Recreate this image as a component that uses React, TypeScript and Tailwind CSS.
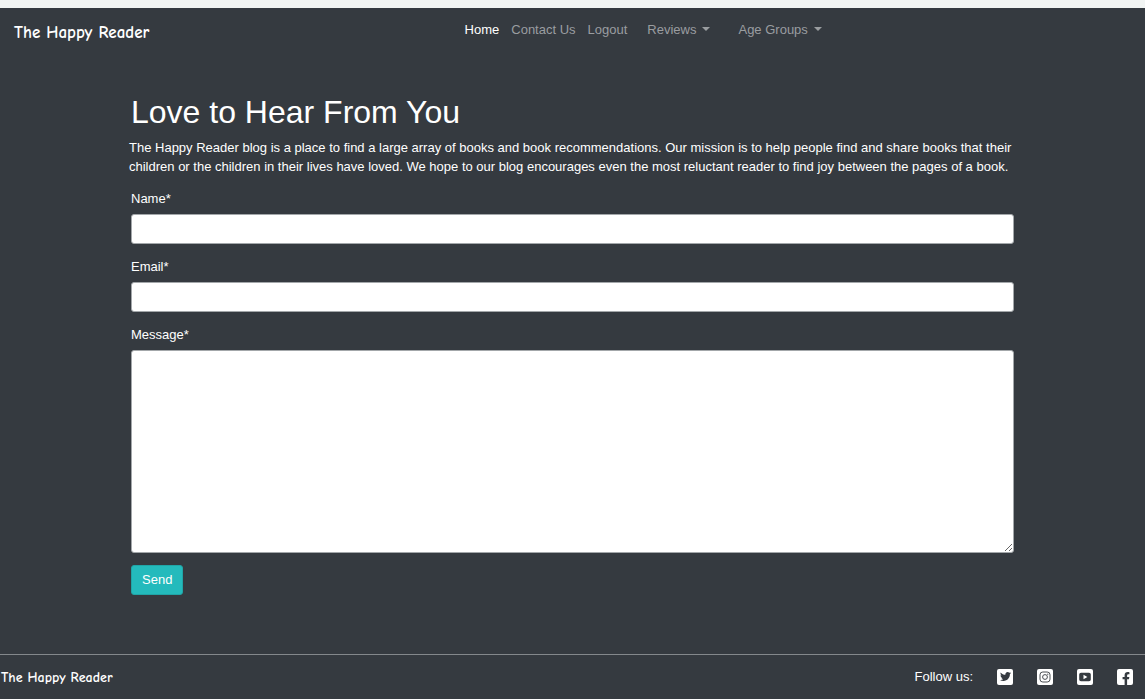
import { FaFacebookF, FaTwitter } from "react-icons/fa";

const brandFont = "font-['Comic_Sans_MS','Comic_Neue',Lato,sans-serif] font-bold";

function Caret() {
  return <span aria-hidden="true" className="mb-0.5 h-0 w-0 border-x-4 border-t-4 border-x-transparent border-t-current" />;
}

function TwitterIcon() {
  return <FaTwitter className="m-auto size-[11px]" />;
}

function InstagramIcon() {
  return (
    <svg viewBox="0 0 16 16" className="size-4" fill="none" stroke="currentColor">
      <rect x="3" y="3" width="10" height="10" rx="2.8" strokeWidth="0.9" />
      <circle cx="8" cy="8" r="2.4" strokeWidth="0.9" />
      <circle cx="10.8" cy="5.2" r="0.6" fill="currentColor" stroke="none" />
    </svg>
  );
}

function YoutubeIcon() {
  return (
    <svg viewBox="0 0 16 16" className="size-4" fill="currentColor">
      <path fillRule="evenodd" d="M4 3.8h8q1.8 0 1.8 1.8v4.8q0 1.8-1.8 1.8H4q-1.8 0-1.8-1.8V5.6Q2.2 3.8 4 3.8ZM6.5 5.8v4.4L10.4 8Z" />
    </svg>
  );
}

function FacebookIcon() {
  return <FaFacebookF className="mt-auto ml-[5px] h-[13px] w-2" />;
}

const menus = ["Reviews", "Age Groups"];

const socials = [
  { label: "Twitter", Icon: TwitterIcon },
  { label: "Instagram", Icon: InstagramIcon },
  { label: "YouTube", Icon: YoutubeIcon },
  { label: "Facebook", Icon: FacebookIcon },
];

function Header() {
  return (
    <header className="flex items-start gap-1.5 px-3.5 pt-3">
      <a href="#home" className={`${brandFont} text-[17px] leading-[26px] whitespace-nowrap`}>
        The Happy Reader
      </a>
      <nav className="flex flex-1 justify-center leading-5 whitespace-nowrap text-[#9a9da0]">
        <a href="#home" className="mr-3 text-white">Home</a>
        <a href="#contact" className="mr-3">Contact Us</a>
        <a href="#logout" className="mr-5">Logout</a>
        <div className="flex gap-7">
          {menus.map((menu) => (
            <button key={menu} type="button" className="flex items-center gap-1.5">
              {menu}
              <Caret />
            </button>
          ))}
        </div>
      </nav>
    </header>
  );
}

function ContactForm() {
  const label = "mb-1 block leading-[22px]";
  const field = "mb-3 block w-full rounded-[3px] border border-[#a3a7aa] bg-white px-2 text-[#495057]";
  return (
    <form className="px-0.5" onSubmit={(event) => event.preventDefault()}>
      <label htmlFor="name" className={label}>Name*</label>
      <input id="name" name="name" type="text" required className={`${field} h-[30px]`} />
      <label htmlFor="email" className={label}>Email*</label>
      <input id="email" name="email" type="email" required className={`${field} h-[30px]`} />
      <label htmlFor="message" className={label}>Message*</label>
      <textarea id="message" name="message" required className={`${field} h-[203px] resize-y py-1`} />
      <button type="submit" className="h-[30px] rounded-[3px] border border-[#20a5a7] bg-[#24babc] px-2.5">
        Send
      </button>
    </form>
  );
}

function Footer() {
  return (
    <footer className="flex h-[45px] items-center justify-between border-t border-[#84888c] pr-3">
      <span className={`${brandFont} pl-px text-[14px]`}>The Happy Reader</span>
      <div className="flex items-center gap-6 pb-px">
        <span>Follow us:</span>
        {socials.map(({ label, Icon }) => (
          <a
            key={label}
            href={`#${label.toLowerCase()}`}
            aria-label={label}
            className="flex size-4 overflow-hidden rounded-[2px] bg-white text-[#353a40]"
          >
            <Icon />
          </a>
        ))}
      </div>
    </footer>
  );
}

export default function App() {
  return (
    <div className="flex min-h-screen flex-col border-t-8 border-[#f1f4f3] bg-[#353a40] font-['Liberation_Sans',Arial,sans-serif] text-[13px] text-white">
      <Header />
      <main className="mx-auto w-full max-w-[887px] flex-1 pt-[46px]">
        <h1 className="px-0.5 text-[32px] leading-10">Love to Hear From You</h1>
        <p className="mt-1.5 mb-3 leading-[19px]">
          The Happy Reader blog is a place to find a large array of books and book recommendations. Our mission is to
          help people find and share books that their children or the children in their lives have loved. We hope to our
          blog encourages even the most reluctant reader to find joy between the pages of a book.
        </p>
        <ContactForm />
      </main>
      <Footer />
    </div>
  );
}
